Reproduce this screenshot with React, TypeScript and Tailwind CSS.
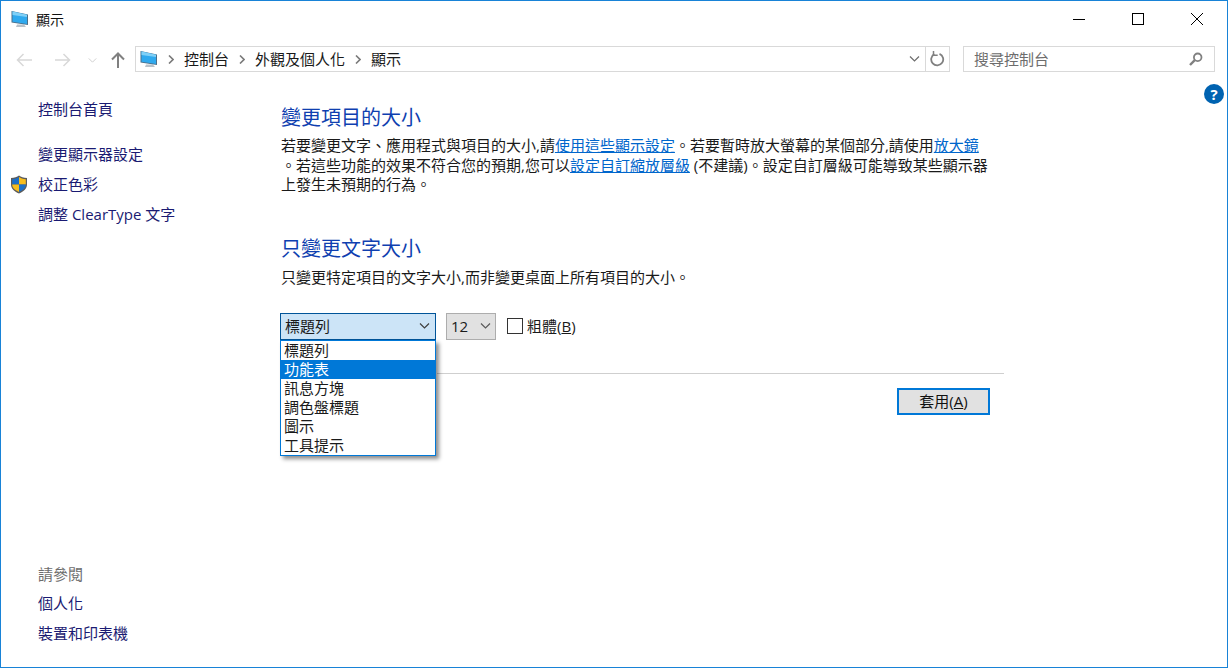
const fontStack = '"Open Sans", "Noto Sans CJK TC", sans-serif';

function MonitorIcon({ className }: { className: string }) {
  return (
    <svg className={className} viewBox="0 0 18 18">
      <path d="M6 14.5h7l2 2.5H5z" fill="#b9c2c9" />
      <path d="M0.5 1 L17 4.5 V15 L0.5 12.5 Z" fill="#4a6f8a" />
      <path d="M1.5 1.6 L16 4.8 V14 L1.5 11.8 Z" fill="#2fa9ee" />
      <path d="M1.5 1.6 L16 4.8 V7 L1.5 5 Z" fill="#7fd0f7" />
    </svg>
  );
}

function ShieldIcon() {
  return (
    <svg className="h-[19px] w-[18px]" viewBox="0 0 18 19">
      <path d="M9 .5c2 1.6 4.500 2.300 8 2.500v6.500c0 4-3 7-8 9-5-2-8-5-8-9V3c3.500-.2 6-.9 8-2.500z" fill="#5c5c5c" />
      <path d="M9 2v7.500H2.200V4.200C5 4 7.300 3.300 9 2z" fill="#1b6fc8" />
      <path d="M9 2c1.700 1.300 4 2 6.800 2.200v5.300H9z" fill="#f7bd1d" />
      <path d="M2.200 9.500H9V17c-4-1.700-6.800-4-6.800-7.500z" fill="#f7bd1d" />
      <path d="M15.800 9.500H9V17c4-1.700 6.800-4 6.800-7.500z" fill="#1b6fc8" />
    </svg>
  );
}

function Arrow({ color, dir }: { color: string; dir: 'left' | 'right' }) {
  return (
    <svg className="h-[14px] w-[16px]" viewBox="0 0 16 14" fill="none" stroke={color} strokeWidth="1.500">
      {dir === 'left' ? <path d="M16 7H1.500M7.500 1 1.500 7l6 6" /> : <path d="M0 7h14.500M8.500 1l6 6-6 6" />}
    </svg>
  );
}

function Crumb() {
  return (
    <svg className="mx-[10px] h-[9px] w-[6px] shrink-0" viewBox="0 0 6 9" fill="none" stroke="#7a7a7a" strokeWidth="1.600">
      <path d="M1 .5 5 4.500 1 8.500" />
    </svg>
  );
}

function Chevron({ className, color }: { className: string; color: string }) {
  return (
    <svg className={className} viewBox="0 0 10 6" fill="none" stroke={color} strokeWidth="1.200">
      <path d="M.5.5 5 5 9.500.5" />
    </svg>
  );
}

function SideLink({ children, icon, className }: { children: string; icon?: boolean; className: string }) {
  return (
    <div className={`flex h-5 items-center text-[15px] text-[#1a1a72] ${className}`}>
      <span className="flex w-[28px] shrink-0 items-center">{icon && <ShieldIcon />}</span>
      <span className="whitespace-nowrap">{children}</span>
    </div>
  );
}

const textSizes = ['標題列', '功能表', '訊息方塊', '調色盤標題', '圖示', '工具提示'];

export default function App() {
  return (
    <div
      lang="zh-Hant"
      className="flex h-[668px] w-[1228px] flex-col overflow-hidden border border-[#1883d7] bg-white text-[#1a1a1a]"
      style={{ fontFamily: fontStack }}
    >
      {/* Title bar */}
      <div className="flex h-[45px] shrink-0 items-start">
        <div className="flex h-[36px] items-center pl-[10px]">
          <MonitorIcon className="h-[18px] w-[18px]" />
          <span className="ml-[7px] text-[14px] text-[#111]">顯示</span>
        </div>
        <div className="ml-auto flex h-[36px] items-center pr-[1px]">
          <div className="flex w-[58px] justify-center">
            <div className="h-px w-3 bg-black" />
          </div>
          <div className="flex w-[59px] justify-center">
            <div className="h-3 w-3 border border-black" />
          </div>
          <div className="flex w-[59px] justify-center">
            <svg className="h-3 w-3" viewBox="0 0 12 12" stroke="#000" strokeWidth="1">
              <path d="M0 0l12 12M12 0 0 12" />
            </svg>
          </div>
        </div>
      </div>

      {/* Navigation row */}
      <div className="flex h-[26px] shrink-0 items-center">
        <div className="ml-[15px] flex w-[119px] shrink-0 items-center pt-[2px]">
          <Arrow color="#d8d8d8" dir="left" />
          <div className="ml-[23px]">
            <Arrow color="#d8d8d8" dir="right" />
          </div>
          <Chevron className="ml-[17px] h-[5px] w-[9px]" color="#d0d0d0" />
          <svg className="ml-[14px] h-[16px] w-[14px]" viewBox="0 0 14 16" fill="none" stroke="#808080" strokeWidth="2">
            <path d="M7 16V2M1 7.500l6-6 6 6" />
          </svg>
        </div>
        <div className="flex h-[26px] w-[815px] shrink-0 items-center border border-[#d9d9d9] pl-[4px]">
          <MonitorIcon className="h-[18px] w-[18px]" />
          <Crumb />
          <span className="text-[15px]">控制台</span>
          <Crumb />
          <span className="text-[15px]">外觀及個人化</span>
          <Crumb />
          <span className="text-[15px]">顯示</span>
          <Chevron className="ml-auto mr-[5px] h-[6px] w-[11px]" color="#6d6d6d" />
          <div className="flex h-full w-[24px] items-center justify-center border-l border-[#d9d9d9]">
            <svg className="h-[16px] w-[15px]" viewBox="0 0 15 16" fill="none" stroke="#808080" strokeWidth="1.800">
              <path d="M9.500 2.800a6 6 0 1 1-5.200.3" />
              <path d="M3.500 0v4.200h4.200" strokeWidth="1.500" />
            </svg>
          </div>
        </div>
        <div className="ml-[13px] flex h-[26px] w-[252px] shrink-0 items-center justify-between border border-[#d9d9d9] pl-[10px] pr-[11px]">
          <span className="text-[15px] text-[#6d6d6d]">搜尋控制台</span>
          <svg className="h-[14px] w-[14px]" viewBox="0 0 14 14" fill="none" stroke="#808080">
            <circle cx="8.700" cy="5.300" r="3.800" strokeWidth="1.800" />
            <path d="M5.800 8.200 1 13" strokeWidth="2.400" />
          </svg>
        </div>
      </div>

      {/* Body */}
      <div className="flex min-h-0 flex-1">
        <aside className="flex w-[280px] shrink-0 flex-col pb-[24px] pl-[9px] pt-[27px]">
          <SideLink className="">控制台首頁</SideLink>
          <SideLink className="mt-[25px]">變更顯示器設定</SideLink>
          <SideLink className="mt-[10px]" icon>校正色彩</SideLink>
          <SideLink className="mt-[10px]">調整 ClearType 文字</SideLink>
          <div className="mt-auto flex h-5 items-center pl-[28px] text-[15px] text-[#6d6d6d]">請參閱</div>
          <SideLink className="mt-[9px]">個人化</SideLink>
          <SideLink className="mt-[10px]">裝置和印表機</SideLink>
        </aside>

        <main className="w-[723px] shrink-0 pt-[32px]">
          <h1 className="h-[28px] text-[20px] leading-[28px] text-[#0f3fb0]">變更項目的大小</h1>
          <p className="mt-[4px] whitespace-nowrap text-[15px] leading-[19.5px]">
            若要變更文字、應用程式與項目的大小,請<a className="text-[#0066cc] underline">使用這些顯示設定</a>。若要暫時放大螢幕的某個部分,請使用<a className="text-[#0066cc] underline">放大鏡</a>
            <br />
            。若這些功能的效果不符合您的預期,您可以<a className="text-[#0066cc] underline">設定自訂縮放層級</a> (不建議)。設定自訂層級可能導致某些顯示器
            <br />
            上發生未預期的行為。
          </p>
          <h2 className="mt-[40px] h-[28px] text-[20px] leading-[28px] text-[#0f3fb0]">只變更文字大小</h2>
          <p className="mt-[4px] h-5 text-[15px] leading-5">只變更特定項目的文字大小,而非變更桌面上所有項目的大小。</p>

          <div className="-ml-px mt-[26px] flex h-[27px] items-center">
            <div className="relative h-[27px] w-[156px]">
              <div className="flex h-full items-center justify-between border border-[#005499] bg-[#cce4f7] pl-[4px] pr-[5px] text-[15px]">
                <span>標題列</span>
                <Chevron className="h-[6px] w-[11px]" color="#3f3f3f" />
              </div>
              <ul className="absolute left-0 top-full z-10 w-[156px] border border-[#0078d7] bg-white shadow-[3px_3px_4px_rgba(0,0,0,0.45)]">
                {textSizes.map((item) => (
                  <li
                    key={item}
                    className={`h-[19px] pl-[3px] text-[15px] leading-[19px] ${item === '功能表' ? 'bg-[#0078d7] text-white' : ''}`}
                  >
                    {item}
                  </li>
                ))}
              </ul>
            </div>
            <div className="ml-[10px] flex h-[27px] w-[50px] items-center justify-between border border-[#adadad] bg-[#e1e1e1] pl-[4px] pr-[4px] text-[15px]">
              <span>12</span>
              <Chevron className="h-[6px] w-[11px]" color="#5a5a5a" />
            </div>
            <div className="ml-[11px] h-[16px] w-[16px] border border-[#333] bg-white" />
            <span className="ml-[4px] text-[15px]">
              粗體(<span className="underline">B</span>)
            </span>
          </div>

          <div className="ml-[156px] mt-[33px] h-px bg-[#cfcfcf]" />
          <div className="mr-[14px] mt-[14px] flex justify-end">
            <button className="h-[27px] w-[93px] border-2 border-[#0078d7] bg-[#e1e1e1] text-[15px] text-[#111]">
              套用(<span className="underline">A</span>)
            </button>
          </div>
        </main>

        <div className="ml-auto pr-[3px] pt-[12px]">
          <div className="flex h-5 w-5 items-center justify-center rounded-full bg-[#0063b1] text-[15px] font-bold text-white">?</div>
        </div>
      </div>
    </div>
  );
}
